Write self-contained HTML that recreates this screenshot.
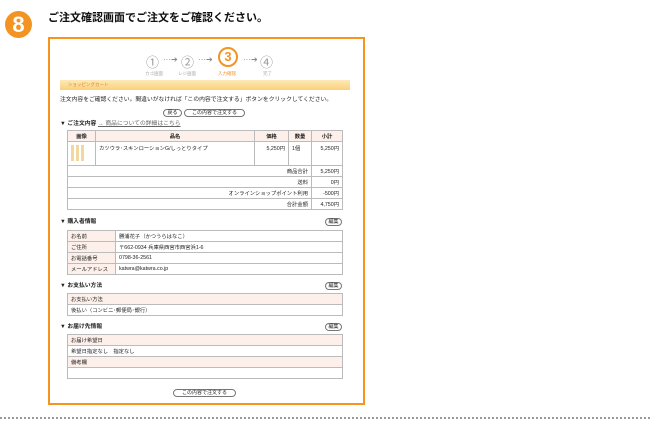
<!DOCTYPE html><html><head><meta charset="utf-8"><style>
*{margin:0;padding:0;box-sizing:border-box}
body{width:650px;height:428px;background:#fff;position:relative;overflow:hidden;font-family:"Liberation Sans","Noto Sans CJK JP",sans-serif;color:#222}
.a{position:absolute;white-space:nowrap}
.t{font-size:5.8px;line-height:11px}
.b{font-weight:bold}
table{position:absolute;border-collapse:collapse;font-size:5.3px;color:#222}
td{border:1px solid #bbb;padding:0 3px;height:11px;white-space:nowrap}
.h{background:#fdf0ea}
.hd td{font-weight:bold}
.btn{position:absolute;border:1px solid #777;border-radius:5px;font-size:5px;line-height:7px;text-align:center;background:#fff;color:#222}
</style></head><body>
<div class="a" style="left:5px;top:11px;width:27px;height:27px;border-radius:50%;background:#f39322;color:#fff;font:bold 22px/27px 'Liberation Sans',sans-serif;text-align:center">8</div>
<div class="a" style="left:48px;top:9px;font-size:11px;color:#111;font-weight:bold">ご注文確認画面でご注文をご確認ください。</div>
<div class="a" style="left:48px;top:37px;width:317px;height:368px;border:2px solid #f7941d"></div>
<div class="a" style="left:146px;top:52px;font-size:13px;color:#999">①</div>
<div class="a" style="left:163px;top:55px;font-size:8px;color:#888">···➔</div>
<div class="a" style="left:181px;top:52px;font-size:13px;color:#999">②</div>
<div class="a" style="left:198px;top:55px;font-size:8px;color:#888">···➔</div>
<div class="a" style="left:218px;top:47px;width:20px;height:20px;border:2.5px solid #f39322;border-radius:50%;color:#f39322;font:bold 13px/15px 'Liberation Sans',sans-serif;text-align:center">3</div>
<div class="a" style="left:243px;top:55px;font-size:8px;color:#888">···➔</div>
<div class="a" style="left:260px;top:52px;font-size:13px;color:#999">④</div>
<div class="a" style="left:145px;top:71px;font-size:4.5px;color:#aaa">カゴ画面</div>
<div class="a" style="left:178px;top:71px;font-size:4.5px;color:#aaa">レジ画面</div>
<div class="a" style="left:218px;top:71px;font-size:4.5px;color:#f39322">入力確認</div>
<div class="a" style="left:263px;top:71px;font-size:4.5px;color:#aaa">完了</div>
<div class="a" style="left:60px;top:80px;width:290px;height:10px;background:linear-gradient(#fde9b8,#fbd07a)"></div>
<div class="a" style="left:68px;top:82px;font-size:4.5px;color:#d9822b">ショッピングカート</div>
<div class="a t" style="left:60px;top:95px">注文内容をご確認ください。間違いがなければ「この内容で注文する」ボタンをクリックしてください。</div>
<div class="btn" style="left:163px;top:109px;width:19px;height:8px">戻る</div>
<div class="btn" style="left:184px;top:109px;width:61px;height:8px">この内容で注文する</div>
<div class="a t b" style="left:60px;top:119px">▼ ご注文内容 <span style="font-weight:normal;color:#666;text-decoration:underline">→ 商品についての詳細はこちら</span></div>
<table style="left:67px;top:130px;width:276px">
<tr class="h hd" style="text-align:center"><td style="width:28px">画像</td><td>品名</td><td style="width:34px">価格</td><td style="width:23px">数量</td><td style="width:31px">小計</td></tr>
<tr style="vertical-align:top"><td style="height:24px"><div style="display:flex;gap:2px;margin-top:3px"><span style="width:3px;height:16px;background:#f2d8a0"></span><span style="width:3px;height:16px;background:#f2d8a0"></span><span style="width:3px;height:16px;background:#f2d8a0"></span></div></td><td style="padding-top:2px">カツウラ･スキンローションG/しっとりタイプ</td><td style="text-align:right;padding-top:2px">5,250円</td><td style="padding-top:2px">1個</td><td style="text-align:right;padding-top:2px">5,250円</td></tr>
<tr><td colspan="4" style="text-align:right">商品合計</td><td style="text-align:right">5,250円</td></tr>
<tr><td colspan="4" style="text-align:right">送料</td><td style="text-align:right">0円</td></tr>
<tr><td colspan="4" style="text-align:right">オンラインショップポイント利用</td><td style="text-align:right">-500円</td></tr>
<tr><td colspan="4" style="text-align:right">合計金額</td><td style="text-align:right">4,750円</td></tr>
</table>
<div class="a t b" style="left:60px;top:217px">▼ 購入者情報</div>
<div class="btn" style="left:325px;top:218px;width:17px;height:8px">編集</div>
<table style="left:67px;top:230px;width:276px">
<tr><td class="h" style="width:48px">お名前</td><td>勝浦花子（かつうらはなこ）</td></tr>
<tr><td class="h">ご住所</td><td>〒662-0934 兵庫県西宮市西宮浜1-6</td></tr>
<tr><td class="h">お電話番号</td><td>0798-36-2561</td></tr>
<tr><td class="h">メールアドレス</td><td>katwra@katwra.co.jp</td></tr>
</table>
<div class="a t b" style="left:60px;top:281px">▼ お支払い方法</div>
<div class="btn" style="left:325px;top:282px;width:17px;height:8px">編集</div>
<table style="left:67px;top:293px;width:276px">
<tr><td class="h">お支払い方法</td></tr><tr><td>後払い（コンビニ･郵便局･銀行）</td></tr>
</table>
<div class="a t b" style="left:60px;top:322px">▼ お届け先情報</div>
<div class="btn" style="left:325px;top:323px;width:17px;height:8px">編集</div>
<table style="left:67px;top:334px;width:276px">
<tr><td class="h">お届け希望日</td></tr><tr><td>希望日指定なし　指定なし</td></tr><tr><td class="h">備考欄</td></tr><tr><td></td></tr>
</table>
<div class="btn" style="left:173px;top:389px;width:63px;height:8px">この内容で注文する</div>
<div class="a" style="left:0;top:417px;width:650px;border-top:2px dotted #999"></div>
</body></html>
